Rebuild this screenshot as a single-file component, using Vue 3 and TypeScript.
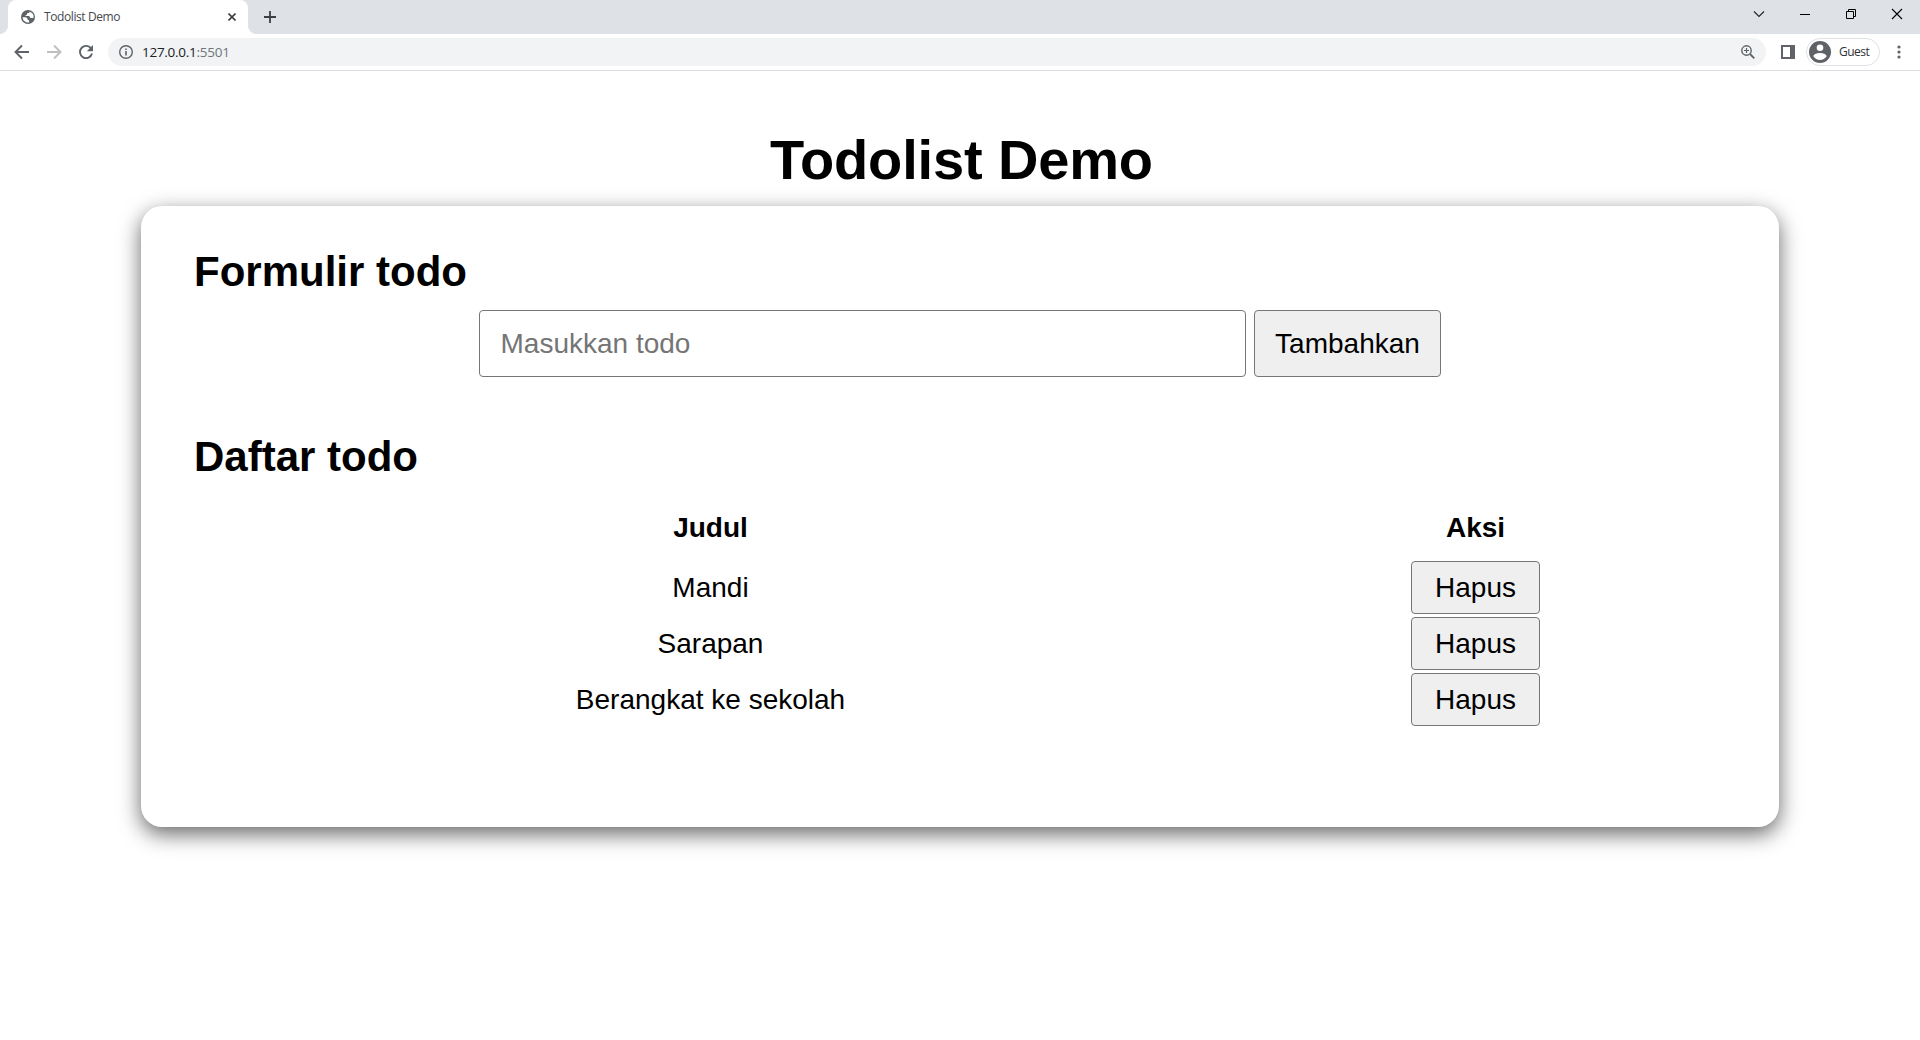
<script setup lang="ts">
import { ref } from 'vue'

const todos = ref<string[]>(['Mandi', 'Sarapan', 'Berangkat ke sekolah'])
const draft = ref('')

function addTodo(): void {
  const title = draft.value.trim()
  if (!title) return
  todos.value.push(title)
  draft.value = ''
}

function removeTodo(index: number): void {
  todos.value.splice(index, 1)
}
</script>

<template>
  <div class="window">
    <header class="tabstrip">
      <div class="tab">
        <svg class="favicon" width="14" height="14" viewBox="0 0 14 14">
          <circle cx="7" cy="7" r="7" fill="#5f6368" />
          <path d="M8.600 1.700c-.2 1-.8 1.400-1.700 1.400-.7 0-.8.500-.8 1 0 .6-.3.900-1 .9-.5 0-.7.300-.6.900h2.600c1.200 0 1.700.500 1.700 1.300 0 .5.400.800 1 .8h2.700A5.600 5.600 0 0 0 8.600 1.700Z" fill="#fff" />
          <path d="M1.500 7.300h2.700c1.400 0 2.300.800 2.300 2 0 .5.300.700.8.700.6 0 .8.300.8.900v1.500A5.600 5.600 0 0 1 1.500 7.300Z" fill="#fff" />
        </svg>
        <span class="tab-title">Todolist Demo</span>
        <svg class="tab-close" width="8" height="8" viewBox="0 0 8 8"><path d="M.5.5l7 7M7.500.5l-7 7" stroke="#3c4043" stroke-width="1.600" /></svg>
      </div>
      <svg class="new-tab" width="12" height="12" viewBox="0 0 12 12"><path d="M6 0v12M0 6h12" stroke="#3c4043" stroke-width="1.800" /></svg>
      <div class="controls">
        <svg width="46" height="28" viewBox="0 0 46 28"><path d="M18 11.500l5 5 5-5" fill="none" stroke="#222" stroke-width="1.100" /></svg>
        <svg width="46" height="28" viewBox="0 0 46 28"><path d="M18 14.500h10" stroke="#000" /></svg>
        <svg width="46" height="28" viewBox="0 0 46 28"><path d="M18.500 11.500h7v7h-7zM20.500 11.500v-2h7v7h-2" fill="none" stroke="#000" /></svg>
        <svg width="46" height="28" viewBox="0 0 46 28"><path d="M18 9l10 10M28 9L18 19" stroke="#000" stroke-width="1.100" /></svg>
      </div>
    </header>

    <nav class="toolbar">
      <svg class="nav-icon" width="16" height="16" viewBox="0 0 16 16"><path d="M15 8H2M8 1.500L1.500 8 8 14.500" fill="none" stroke="#5f6368" stroke-width="1.900" /></svg>
      <svg class="nav-icon" width="16" height="16" viewBox="0 0 16 16"><path d="M1 8h13M8 1.500L14.500 8 8 14.500" fill="none" stroke="#bdbfc1" stroke-width="1.900" /></svg>
      <svg class="nav-icon" width="16" height="16" viewBox="0 0 16 16"><path d="M13.300 4.800A6.100 6.100 0 1 0 14 9.500" fill="none" stroke="#5f6368" stroke-width="1.900" /><path d="M15 1v6.200H8.800Z" fill="#5f6368" /></svg>
      <div class="omnibox">
        <svg width="14" height="14" viewBox="0 0 14 14"><circle cx="7" cy="7" r="6.300" fill="none" stroke="#5f6368" stroke-width="1.400" /><path d="M7 6v4.500M7 3.400V5" stroke="#5f6368" stroke-width="1.600" /></svg>
        <span class="url">127.0.0.1<span class="port">:5501</span></span>
        <svg class="zoom-icon" width="14" height="14" viewBox="0 0 14 14"><circle cx="5.500" cy="5.500" r="4.700" fill="none" stroke="#5f6368" stroke-width="1.400" /><path d="M9 9l4.300 4.300" stroke="#5f6368" stroke-width="1.800" /><path d="M3 5.500h5M5.500 3v5" stroke="#5f6368" stroke-width="1.200" /></svg>
      </div>
      <svg class="panel-icon" width="14" height="14" viewBox="0 0 14 14"><path d="M0 0h14v14H0zM2 2v10h7V2z" fill="#5f6368" fill-rule="evenodd" /></svg>
      <div class="profile">
        <svg width="22" height="22" viewBox="0 0 22 22"><circle cx="11" cy="11" r="11" fill="#5f6368" /><circle cx="11" cy="6.800" r="3.300" fill="#fff" /><path d="M4.300 15.300c.5-2.300 4-3.300 6.700-3.300s6.200 1 6.700 3.300a8 8 0 0 1-13.400 0Z" fill="#fff" /></svg>
        <span class="profile-name">Guest</span>
      </div>
      <svg class="menu-icon" width="4" height="14" viewBox="0 0 4 14"><g fill="#5f6368"><circle cx="2" cy="2" r="1.600" /><circle cx="2" cy="7" r="1.600" /><circle cx="2" cy="12" r="1.600" /></g></svg>
    </nav>

    <main class="page">
      <h1>Todolist Demo</h1>
      <section class="card">
        <h2>Formulir todo</h2>
        <form class="todo-form" @submit.prevent="addTodo">
          <input v-model="draft" type="text" placeholder="Masukkan todo" />
          <button type="submit" class="add">Tambahkan</button>
        </form>
        <h2 class="list-title">Daftar todo</h2>
        <div class="list">
          <div class="row head"><span>Judul</span><span>Aksi</span></div>
          <div v-for="(todo, index) in todos" :key="index" class="row">
            <span>{{ todo }}</span>
            <button type="button" class="remove" @click="removeTodo(index)">Hapus</button>
          </div>
        </div>
      </section>
    </main>
  </div>
</template>

<style>
body {
  margin: 0;
  background: #fff;
  overflow: hidden;
}
</style>

<style scoped>
.window {
  display: flex;
  flex-direction: column;
  height: 1040px;
  background: #fff;
  font-family: "Liberation Sans", Arial, sans-serif;
  color: #000;
}
svg {
  display: block;
  flex: none;
}
.tabstrip {
  display: flex;
  height: 34px;
  flex: none;
  background: #dee1e6;
  font-family: "Open Sans", "Noto Sans", sans-serif;
}
.tab {
  position: relative;
  display: flex;
  align-items: center;
  box-sizing: border-box;
  width: 240px;
  height: 34px;
  margin-left: 8px;
  padding: 0 12px 0 13px;
  background: #fff;
  border-radius: 8px 8px 0 0;
}
.tab::before,
.tab::after {
  content: "";
  position: absolute;
  bottom: 0;
  width: 8px;
  height: 8px;
}
.tab::before {
  left: -8px;
  background: radial-gradient(circle at 0 0, transparent 7.5px, #fff 8.2px);
}
.tab::after {
  right: -8px;
  background: radial-gradient(circle at 100% 0, transparent 7.5px, #fff 8.2px);
}
.tab-title {
  margin-left: 9px;
  font-size: 12px;
  line-height: 16px;
  letter-spacing: -0.4px;
  color: #45484c;
}
.tab-close {
  margin-left: auto;
}
.new-tab {
  margin: 11px 0 0 16px;
}
.controls {
  display: flex;
  margin-left: auto;
}
.toolbar {
  display: flex;
  align-items: center;
  box-sizing: border-box;
  height: 37px;
  flex: none;
  padding: 0 19px 0 14px;
  border-bottom: 1px solid #dadce0;
  font-family: "Open Sans", "Noto Sans", sans-serif;
}
.nav-icon {
  margin-right: 16px;
}
.omnibox {
  display: flex;
  flex: 1;
  align-items: center;
  box-sizing: border-box;
  height: 28px;
  margin-left: -2px;
  padding: 0 11px;
  border-radius: 14px;
  background: #f1f3f4;
}
.url {
  margin-left: 9px;
  font-size: 13.5px;
  line-height: 18px;
  letter-spacing: -0.27px;
  color: #202124;
}
.port {
  color: #70757a;
}
.zoom-icon {
  margin-left: auto;
}
.panel-icon {
  margin: 0 11px 0 15px;
}
.profile {
  display: flex;
  align-items: center;
  box-sizing: border-box;
  width: 74px;
  height: 28px;
  padding-left: 2px;
  border: 1px solid #dfe1e5;
  border-radius: 14px;
}
.profile-name {
  margin-left: 8px;
  font-size: 12px;
  line-height: 16px;
  letter-spacing: -0.5px;
  color: #303236;
}
.menu-icon {
  margin-left: 17px;
}
.page {
  padding: 57px 141px 0;
}
h1 {
  margin: 0;
  padding-left: 3px;
  font-size: 56px;
  line-height: 64px;
  letter-spacing: -0.15px;
  text-align: center;
}
.card {
  box-sizing: border-box;
  height: 621px;
  margin-top: 14px;
  padding: 42px 53px 0;
  border-radius: 21px;
  background: #fff;
  box-shadow: 0 7px 21px rgba(0, 0, 0, 0.6);
}
h2 {
  margin: 0;
  font-size: 42px;
  line-height: 48px;
}
.todo-form {
  display: flex;
  justify-content: center;
  gap: 8px;
  margin-top: 14px;
}
input,
button {
  box-sizing: border-box;
  margin: 0;
  border: 1px solid #767676;
  border-radius: 4px;
  font-family: inherit;
  font-size: 28px;
  line-height: 32px;
}
input {
  width: 767px;
  height: 67px;
  padding: 0 20.5px;
  background: #fff;
}
input::placeholder {
  color: #757575;
  opacity: 1;
}
button {
  padding: 0;
  background: #efefef;
  color: #000;
}
.add {
  width: 187px;
  height: 67px;
}
.list-title {
  margin-top: 56px;
}
.list {
  margin-top: 27px;
  font-size: 28px;
}
.row {
  display: grid;
  grid-template-columns: 1033px 497px;
  align-items: center;
  justify-items: center;
  height: 53px;
  margin-bottom: 3px;
}
.head {
  height: 40px;
  margin-bottom: 13px;
  font-weight: bold;
}
.remove {
  width: 129px;
  height: 53px;
}
</style>
